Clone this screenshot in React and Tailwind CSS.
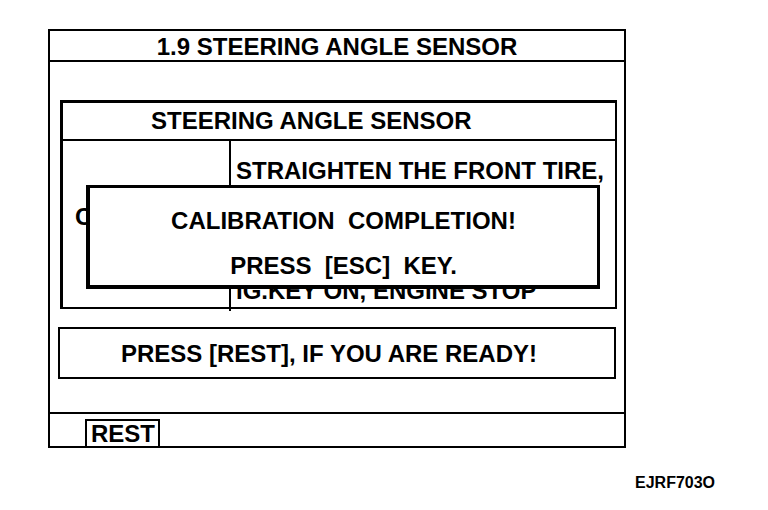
export default function App() {
  const font = { fontFamily: '"Liberation Sans", Arial, sans-serif' };

  return (
    <div className="h-[510px] w-[768px] overflow-hidden bg-white pl-[48px] pt-[29px] text-black" style={font}>
      {/* Screen frame */}
      <div className="flex h-[419px] w-[578px] flex-col border-2 border-black">
        {/* Title */}
        <div className="h-[31px] shrink-0 border-b-2 border-black pt-[4px] text-center text-[24px] font-bold leading-6">
          1.9 STEERING ANGLE SENSOR
        </div>

        {/* Sensor panel */}
        <div className="relative ml-[10px] mt-[38px] flex h-[209px] w-[557px] shrink-0 flex-col border-2 border-l-[3px] border-t-[3px] border-black">
          <div className="h-[38px] shrink-0 border-b-2 border-black pl-[88px] pt-[6px] text-[24px] font-bold leading-6">
            STEERING ANGLE SENSOR
          </div>
          <div className="flex flex-1">
            <div className="w-[168px] shrink-0 border-r-2 border-black pl-[12px] pt-[56px] text-[24px] font-bold leading-[40px]">
              C
            </div>
            <div className="flex-1 pl-[5px] pt-[10px] text-[24px] font-bold leading-[40px]">
              <div>STRAIGHTEN THE FRONT TIRE,</div>
              <div className="h-[80px]" />
              <div>IG.KEY ON, ENGINE STOP</div>
            </div>
          </div>

          {/* Popup */}
          <div className="absolute left-[23px] top-[82px] h-[104px] w-[514px] border-b-4 border-l-4 border-r-[3px] border-t-[3px] border-black bg-white pt-[21px] text-center text-[24px] font-bold leading-6">
            <div className="whitespace-pre">CALIBRATION  COMPLETION!</div>
            <div className="mt-[21px] whitespace-pre">PRESS  [ESC]  KEY.</div>
          </div>
        </div>

        {/* Ready message */}
        <div className="ml-[8px] mt-[18px] h-[52px] w-[558px] shrink-0 border-2 border-black pr-[16px] pt-[13px] text-center text-[24px] font-bold leading-6">
          PRESS [REST], IF YOU ARE READY!
        </div>

        <div className="flex-1" />

        {/* Function key bar */}
        <div className="h-[34px] shrink-0 border-t-2 border-black">
          <div className="ml-[35px] mt-[5px] h-[27px] w-[75px] border-x-2 border-t-2 border-black pl-[4px] pt-[1px] text-[24px] font-bold leading-6">
            REST
          </div>
        </div>
      </div>

      <div className="ml-[587px] mt-[27px] text-[16px] font-bold leading-4">EJRF703O</div>
    </div>
  );
}
